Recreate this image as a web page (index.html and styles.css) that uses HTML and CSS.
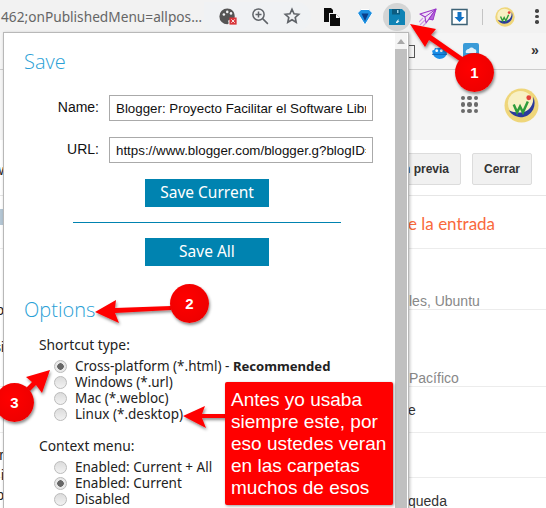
FILE: index.html
```html
<!DOCTYPE html>
<html lang="es">
<head>
<meta charset="utf-8">
<title>Save</title>
<link rel="stylesheet" href="styles.css">
</head>
<body>
<div class="page">
  <svg class="defs" width="0" height="0">
    <defs>
      <symbol id="logo" viewBox="0 0 36 36">
        <circle cx="18" cy="18" r="17.500" fill="#efd67a"/>
        <circle cx="17" cy="16" r="13" fill="#f8f0c4"/>
        <path d="M5 23c5 9 19 10 25-1 2-4 2-9 0-13 1 8-4 15-11 16-5 .7-10 0-14-2z" fill="#2b3a9c"/>
        <path d="M10 17l3.500 8 3-6 3 6 5-11" fill="none" stroke="#2e9b3a" stroke-width="2.500"/>
        <circle cx="25.500" cy="10" r="2.500" fill="#e2403a"/>
      </symbol>
      <filter id="sh" x="-20%" y="-20%" width="140%" height="140%"><feDropShadow dx="1" dy="2" stdDeviation="1.500" flood-color="#000" flood-opacity=".45"/></filter>
    </defs>
  </svg>

  <header class="toolbar">
    <span class="url">462;onPublishedMenu=allpos…</span>
    <div class="tools-in">
      <svg class="ic" viewBox="0 0 24 24"><path d="M11 2a10.500 10.500 0 1 0 0 21c2 0 2-2 1.500-3-.7-1.500 0-3 2-3h3c2 0 3.500-1.500 3.500-4C21 6 17 2 11 2z" fill="#555"/><circle cx="6.500" cy="10" r="1.700" fill="#f1f3f4"/><circle cx="11" cy="6.500" r="1.700" fill="#f1f3f4"/><circle cx="16" cy="8.500" r="1.700" fill="#f1f3f4"/><rect x="14" y="14" width="9.500" height="9.500" fill="#d9363a"/><path d="M16.500 16.500l4.500 4.500m0-4.500l-4.500 4.500" stroke="#fff" stroke-width="1.200"/></svg>
      <svg class="ic" viewBox="0 0 24 24" fill="none" stroke="#5f6368" stroke-width="2"><circle cx="10" cy="10" r="7.500"/><path d="M15.500 15.500l7 7M10 6v8M6 10h8"/></svg>
      <svg class="ic" viewBox="0 0 24 24" fill="none" stroke="#5f6368" stroke-width="2.200"><path d="M12 3l2.700 6 6.300.7-4.700 4.300 1.300 6.300L12 17l-5.600 3.300 1.300-6.300L3 9.700 9.300 9z"/></svg>
    </div>
    <div class="tools-out">
      <svg class="ic ic-copy" viewBox="0 0 18 18"><path d="M1 0h7l2 2v3H6v9H1z" fill="#0c0c0c"/><path d="M7 6h6l4 4v8H7z" fill="#0c0c0c"/><path d="M13 6v4h4z" fill="#fff"/></svg>
      <svg class="ic ic-gem" viewBox="0 0 18 18"><path d="M1.500 5L5 1.500h8L16.500 5 9 17z" fill="#1d8fe0" stroke="#fff" stroke-width="1"/><path d="M5.500 5.500h7L9 13z" fill="#0a3f8a"/></svg>
      <span class="save-ic"><svg viewBox="0 0 16 16" width="16" height="16"><path d="M0 0h13l3 3v13H0z" fill="#0f83b5"/><rect x="3" y="0" width="8" height="5.500" fill="#0b5c80"/><rect x="8" y="1" width="1.500" height="3" fill="#9ed3ea"/><rect x="3" y="8" width="10" height="8" fill="#0f83b5"/><path d="M7 13l2.500-3v2h1l-2 2H7z" fill="#e6f4fa"/></svg></span>
      <svg class="ic ic-plane" viewBox="0 0 18 18"><path d="M17 1L1 6l5 3 1 6 3-4z" fill="#efe3f6" stroke="#9a35c8" stroke-width="1.100" stroke-linejoin="round"/><path d="M17 1L6 9M17 1l-7 10 4 1z" fill="#b667dc" stroke="#9a35c8"/><path d="M0 14l4-4M1 17l5-5M4 18l3-3" stroke="#cf98e8" stroke-width="1.200"/></svg>
      <svg class="ic" viewBox="0 0 18 18"><rect x="1" y="1.500" width="15" height="15" fill="#fff" stroke="#3d6276" stroke-width="1.500"/><path d="M6.500 4h4v5h3L8.500 14l-5-5h3z" fill="#1272c4"/></svg>
      <span class="divider"></span>
      <svg class="ic ic-avatar" viewBox="0 0 36 36"><use href="#logo"/></svg>
      <span class="dots"><i></i><i></i><i></i></span>
    </div>
  </header>

  <nav class="bookmarks">
    <span class="bm-clock"></span>
    <svg class="bm-bird" viewBox="0 0 16 14"><path d="M0 5c2 0 3-1 3-3 3 1 7-1 9 0 2 1 4 3 4 5 0 4-4 7-8 7-3 0-6-2-7-5z" fill="#1a8fe8"/><circle cx="5" cy="5" r="1.500" fill="#fff"/><circle cx="10" cy="5" r="1.500" fill="#fff"/><path d="M0 9h16" stroke="#0d5fb0"/></svg>
    <svg class="bm-cloud" viewBox="0 0 16 18"><rect width="16" height="18" rx="2" fill="#3a9bd8"/><path d="M3 10c-1-2 1-4 3-4 1-2 4-2 5 0 2 0 3 2 2 4z" fill="#dff1fb"/></svg>
    <span class="more">»</span>
  </nav>

  <section class="masthead">
    <div class="apps"><i></i><i></i><i></i><i></i><i></i><i></i><i></i><i></i><i></i></div>
    <svg class="avatar" viewBox="0 0 36 36"><use href="#logo"/></svg>
  </section>

  <section class="actions">
    <span class="pbtn pbtn-cut">n previa</span>
    <span class="pbtn">Cerrar</span>
  </section>

  <div class="row row-orange">e la entrada</div>
  <div class="row row-a">les, Ubuntu</div>
  <div class="row row-b">Pacífico</div>
  <div class="row row-c">e</div>
  <div class="row row-d"></div>
  <div class="row row-e">queda</div>

  <div class="leftcut" aria-hidden="true">
    <span class="lc lc-w">w</span>
    <span class="lc-img"></span>
    <span class="lc lc-o">o</span>
    <span class="lc lc-si">si</span>
    <span class="lc lc-r">r</span>
    <span class="lc lc-i">i</span>
    <span class="lc lc-p">p</span>
  </div>

  <aside class="popup">
    <div class="popup-body">
      <h2 class="title">Save</h2>
      <div class="field"><label class="flabel">Name:</label><input class="finput" value="Blogger: Proyecto Facilitar el Software Libre"></div>
      <div class="field"><label class="flabel">URL:</label><input class="finput" value="https://www.blogger.com/blogger.g?blogID=462"></div>
      <button class="cta">Save Current</button>
      <hr class="rule">
      <button class="cta">Save All</button>
      <h2 class="title title-opt">Options</h2>
      <p class="grp">Shortcut type:</p>
      <ul class="radios">
        <li><span class="radio on"></span>Cross-platform (*.html) - <b>Recommended</b></li>
        <li><span class="radio"></span>Windows (*.url)</li>
        <li><span class="radio"></span>Mac (*.webloc)</li>
        <li><span class="radio"></span>Linux (*.desktop)</li>
      </ul>
      <p class="grp grp-2">Context menu:</p>
      <ul class="radios">
        <li><span class="radio"></span>Enabled: Current + All</li>
        <li><span class="radio on"></span>Enabled: Current</li>
        <li><span class="radio"></span>Disabled</li>
      </ul>
    </div>
    <div class="scroll"><span class="scroll-up"></span><span class="scroll-thumb"></span></div>
  </aside>

  <svg class="arrows" viewBox="0 0 546 508" width="546" height="508">
    <g fill="#f00" filter="url(#sh)">
      <path d="M410 24l26 5-5 6 33 23-3 4-32-22-4 7z"/>
      <path d="M95 312l21-12-1 8 56-2v4l-56 3 4 10z"/>
      <path d="M50 370l-24 7 6 5-6 6 4 3 6-6 6 8z"/>
      <path d="M183 416l22-10-3 8h24v4h-24l4 10z"/>
    </g>
  </svg>

  <span class="badge badge-1">1</span>
  <span class="badge badge-2">2</span>
  <span class="badge badge-3">3</span>
  <div class="note">Antes yo usaba<br>siempre este, por<br>eso ustedes veran<br>en las carpetas<br>muchos de esos</div>
</div>
</body>
</html>
```
FILE: styles.css
```css
* { box-sizing: border-box; }
html, body { margin: 0; padding: 0; }
body { width: 546px; height: 508px; overflow: hidden; background: #fff; font-family: "Liberation Sans", sans-serif; }
.page { position: relative; width: 546px; height: 508px; overflow: hidden; }
.defs { position: absolute; }

.toolbar { height: 33px; background: #f2f2f2; display: flex; align-items: center; position: relative; }
.url { width: 204px; padding-left: 1px; font: 13.700px "Noto Sans", sans-serif; color: #666; white-space: nowrap; }
.tools-in { width: 107px; height: 29px; margin-top: -1px; display: flex; align-items: center; gap: 14px; padding-left: 15px; background: #f0f2f4; border-radius: 0 15px 15px 0; }
.ic { width: 18px; height: 18px; flex: none; }
.tools-out { display: flex; align-items: center; margin-left: 12px; height: 33px; }
.tools-out .ic { margin-right: 14px; }
.tools-out .ic-copy { margin-right: 15px; }
.tools-out .ic-gem { margin-right: 11px; }
.save-ic { width: 28px; height: 28px; margin: 0 8px -1px -2px; border-radius: 50%; background: #d4d5d5; display: flex; align-items: center; justify-content: center; }
.divider { width: 1px; height: 16px; background: #c4c4c4; margin: 0 12px 0 -1px; }
.tools-out .ic-avatar { width: 20px; height: 20px; margin-right: 20px; }
.dots { display: flex; flex-direction: column; gap: 2px; }
.dots i { width: 3.500px; height: 3.500px; border-radius: 50%; background: #444; }

.bookmarks { height: 37px; background: #f5f5f5; border-bottom: 1px solid #ccc; display: flex; align-items: center; position: relative; }
.bm-clock { position: absolute; left: 402px; top: 12px; width: 13px; height: 13px; border: 1px solid #555; }
.bm-bird { position: absolute; left: 432px; top: 13px; width: 15px; height: 13px; }
.bm-cloud { position: absolute; left: 463px; top: 10px; width: 16px; height: 18px; }
.more { position: absolute; left: 531px; top: 9px; font: bold 14px "Liberation Sans", sans-serif; color: #333; }

.masthead { height: 70px; background: #f5f5f5; position: relative; display: flex; align-items: center; justify-content: flex-end; padding: 0 7px 0 0; gap: 26px; }
.apps { display: grid; grid-template-columns: repeat(3, 4.500px); gap: 2px; margin-bottom: 1px; }
.apps i { width: 4.500px; height: 4.500px; border-radius: 50%; background: #6b6b6b; }
.avatar { width: 35px; height: 35px; }

.actions { height: 56px; display: flex; justify-content: flex-end; align-items: flex-start; gap: 11px; padding: 13px 14px 0 0; border-bottom: 1px solid #e6e6e6; }
.pbtn { height: 32px; width: 60px; display: flex; align-items: center; justify-content: center; background: #f1f1f1; border: 1px solid #dcdcdc; border-radius: 2px; font: bold 12px "Liberation Sans", sans-serif; color: #333; }
.pbtn-cut { width: 70px; padding-right: 11px; justify-content: flex-end; white-space: nowrap; }

.row { border-bottom: 1px solid #ececec; padding-left: 408px; white-space: nowrap; font-size: 14px; line-height: 16px; color: #888; display: flex; align-items: flex-end; }
.row-orange { height: 53px; font: 17px Lato, sans-serif; color: #f9693c; align-items: center; padding-top: 3px; }
.row-a { height: 61px; padding-left: 409px; }
.row-b { height: 77px; padding-left: 409px; }
.row-c { height: 46px; color: #333; padding-bottom: 14px; }
.row-d { height: 45px; }
.row-e { height: 40px; color: #333; border-bottom: 0; align-items: flex-start; padding-top: 15px; }

.leftcut { position: absolute; left: 0; top: 0; width: 4px; height: 508px; overflow: hidden; font: 14px/16px "Liberation Sans", sans-serif; color: #222; }
.lc { position: absolute; right: 0; }
.lc-w { top: 162px; }
.lc-img { position: absolute; left: 0; top: 209px; width: 4px; height: 16px; background: #b4c6d4; }
.lc-o { top: 302px; }
.lc-si { top: 339px; }
.lc-r { top: 447px; }
.lc-i { top: 467px; }
.lc-p { top: 487px; }

.popup { position: absolute; left: 3px; top: 32px; width: 406px; height: 480px; background: #fff; border: 1px solid #b8b8b8; border-bottom: 0; box-shadow: 1px 1px 3px rgba(0,0,0,.25); display: flex; }
.popup-body { flex: 1; padding: 0 0 0 20px; font: 13.500px/16px "Noto Sans", sans-serif; color: #222; }
.title { margin: 0; padding-top: 15px; height: 62px; font: 300 20px "Open Sans", sans-serif; color: #2a9fd6; }
.title-opt { padding-top: 0; height: auto; margin-top: 30px; line-height: 28px; }
.field { display: flex; align-items: center; height: 26px; margin-bottom: 16px; }
.flabel { width: 75px; margin: -2px 10px 0 0; text-align: right; font: 14px "Liberation Sans", sans-serif; color: #111; }
.finput { width: 264px; height: 26px; padding: 0 6px; border: 1px solid #aaa; background: #fff; font: 13.333px "Liberation Sans", sans-serif; color: #111; outline: 0; }
.cta { display: block; width: 124px; height: 28px; padding: 0 0 2px; margin: 0 0 0 121px; border: 0; background: #0083b0; color: #fff; font: 15.500px "Noto Sans", sans-serif; }
.rule { width: 268px; height: 1px; margin: 15px 0 15px 49px; border: 0; background: #0083b0; }
.grp { margin: 12px 0 0 15px; font-size: 13.800px; line-height: 18px; }
.grp-2 { margin-top: 15px; }
.radios { list-style: none; margin: 4px 0 0 30px; padding: 0; }
.radios li { display: flex; align-items: center; height: 16px; line-height: 16px; white-space: pre; }
.radios b { font-weight: 700; font-size: 13.100px; }
.radio { width: 13px; height: 13px; margin-right: 8px; flex: none; border-radius: 50%; border: 1px solid #bbb; background: linear-gradient(#dcdcdc, #f2f2f2); }
.radio.on { background: radial-gradient(circle, #666 0 3px, #e8e8e8 3.500px); }
.scroll { width: 12px; flex: none; margin-right: 1px; background: #f4f4f4; display: flex; flex-direction: column; align-items: center; }
.scroll-up { margin-top: 6px; height: 0; width: 0; border: 4px solid transparent; border-top: 0; border-bottom: 5px solid #a8a8a8; }
.scroll-thumb { margin-top: 5px; flex: 1; width: 100%; background: #c0c0c0; }

.arrows { position: absolute; left: 0; top: 0; pointer-events: none; }
.badge { position: absolute; width: 39px; height: 39px; border-radius: 50%; background: radial-gradient(circle at 40% 40%, #f00, #e80000); color: #fff; font: bold 15px/39px "Liberation Sans", sans-serif; text-align: center; box-shadow: 1px 2px 3px rgba(0,0,0,.45); }
.badge-1 { left: 455px; top: 53px; }
.badge-2 { left: 170px; top: 284px; }
.badge-3 { left: -5px; top: 383px; }
.note { position: absolute; left: 225px; top: 382px; width: 168px; height: 123px; padding: 7px 0 0 6px; background: #f00; border-radius: 2px; color: #fff; font: 19px/22px "Liberation Sans", sans-serif; box-shadow: 1px 1px 3px rgba(0,0,0,.4); }
```
